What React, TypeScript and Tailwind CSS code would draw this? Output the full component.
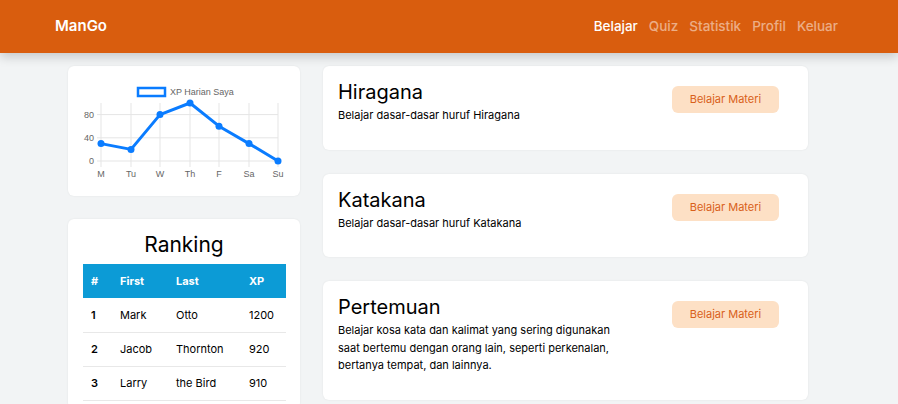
import React from "react";

const font = { fontFamily: "Inter, 'Noto Sans', sans-serif" };

const xp = [30, 20, 80, 100, 60, 30, 0];
const days = ["M", "Tu", "W", "Th", "F", "Sa", "Su"];

const lessons = [
  { title: "Hiragana", desc: "Belajar dasar-dasar huruf Hiragana" },
  { title: "Katakana", desc: "Belajar dasar-dasar huruf Katakana" },
  {
    title: "Pertemuan",
    desc: "Belajar kosa kata dan kalimat yang sering digunakan saat bertemu dengan orang lain, seperti perkenalan, bertanya tempat, dan lainnya.",
  },
];

const ranking = [
  { no: 1, first: "Mark", last: "Otto", xp: 1200 },
  { no: 2, first: "Jacob", last: "Thornton", xp: 920 },
  { no: 3, first: "Larry", last: "the Bird", xp: 910 },
];

function XpChart() {
  const xs = [33, 63, 92, 122, 151, 181, 210];
  const y = (v: number) => 95 - v * 0.58;
  const pts = xp.map((v, i) => `${xs[i]},${y(v)}`).join(" ");
  return (
    <svg width="232" height="130" viewBox="0 0 232 130">
      {/* legend */}
      <rect x="70" y="22" width="27" height="8" fill="white" stroke="#0a7cff" strokeWidth="2.5" />
      <text x="102" y="28.5" fontSize="9" fill="#666" fontFamily="'Liberation Sans', Arial, sans-serif">
        XP Harian Saya
      </text>
      {/* grid */}
      {[0, 40, 80].map((v) => (
        <line key={v} x1="29" x2="210" y1={y(v)} y2={y(v)} stroke="#e5e5e5" strokeWidth="1" />
      ))}
      {xs.map((x) => (
        <line key={x} x1={x} x2={x} y1="37" y2="101" stroke="#e5e5e5" strokeWidth="1" />
      ))}
      {[0, 40, 80].map((v) => (
        <text key={v} x="26" y={y(v) + 3} fontSize="9" fill="#666" textAnchor="end" fontFamily="'Liberation Sans', Arial, sans-serif">
          {v}
        </text>
      ))}
      {days.map((d, i) => (
        <text key={d} x={xs[i]} y="111" fontSize="9" fill="#666" textAnchor="middle" fontFamily="'Liberation Sans', Arial, sans-serif">
          {d}
        </text>
      ))}
      <polyline points={pts} fill="none" stroke="#0a7cff" strokeWidth="3" strokeLinejoin="round" />
      {xp.map((v, i) => (
        <circle key={i} cx={xs[i]} cy={y(v)} r="3.5" fill="#0a7cff" />
      ))}
    </svg>
  );
}

export default function App() {
  return (
    <div className="min-h-[404px] bg-[#f2f4f5] text-black" style={font}>
      <nav className="relative z-10 flex h-[53px] items-center justify-between bg-[#d95d0e] pl-[55px] pr-[60px] shadow-[0_4px_10px_rgba(0,0,0,0.18)]">
        <span className="text-[15px] font-semibold text-white">ManGo</span>
        <div className="flex gap-[11px] text-[13.5px] font-medium">
          <span className="text-white">Belajar</span>
          <span className="text-white/50">Quiz</span>
          <span className="text-white/50">Statistik</span>
          <span className="text-white/50">Profil</span>
          <span className="text-white/50">Keluar</span>
        </div>
      </nav>

      <main className="flex gap-[23px] pl-[68px] pt-[13px]">
        <aside className="flex w-[232px] flex-col gap-[23px]">
          <div className="h-[130px] rounded-md bg-white shadow-[0_0_2px_rgba(0,0,0,0.08)]">
            <XpChart />
          </div>

          <div className="rounded-md bg-white px-[15px] pt-[12px] pb-[8px] shadow-[0_0_2px_rgba(0,0,0,0.08)]">
            <h2 className="mb-[5px] text-center text-[21px] leading-[28px]">Ranking</h2>
            <table className="w-[203px] text-left text-[11px]">
              <thead className="bg-[#0c9bd6] text-white">
                <tr className="h-[34px]">
                  <th className="w-[29px] pl-[8px] font-bold">#</th>
                  <th className="w-[56px] pl-[8px] font-bold">First</th>
                  <th className="w-[73px] pl-[8px] font-bold">Last</th>
                  <th className="pl-[8px] font-bold">XP</th>
                </tr>
              </thead>
              <tbody>
                {ranking.map((r) => (
                  <tr key={r.no} className="h-[34px] border-b border-[#e8e8e8]">
                    <td className="pl-[8px] font-semibold">{r.no}</td>
                    <td className="pl-[8px]">{r.first}</td>
                    <td className="pl-[8px]">{r.last}</td>
                    <td className="pl-[8px]">{r.xp}</td>
                  </tr>
                ))}
              </tbody>
            </table>
          </div>
        </aside>

        <section className="flex w-[485px] flex-col gap-[24px]">
          {lessons.map((l) => (
            <div
              key={l.title}
              className="flex justify-between rounded-md bg-white pl-[15px] pr-[29px] pt-[13px] pb-[9px] shadow-[0_0_2px_rgba(0,0,0,0.08)]"
            >
              <div className="w-[290px]">
                <h3 className="text-[20px] leading-[26px]">{l.title}</h3>
                <p className="mt-[2px] mb-4 text-[11px] leading-[17.5px]">{l.desc}</p>
              </div>
              <button className="mt-[7px] h-[27px] w-[107px] rounded-md bg-[#fde0c5] text-[11px] text-[#d9601a]">
                Belajar Materi
              </button>
            </div>
          ))}
        </section>
      </main>
    </div>
  );
}
